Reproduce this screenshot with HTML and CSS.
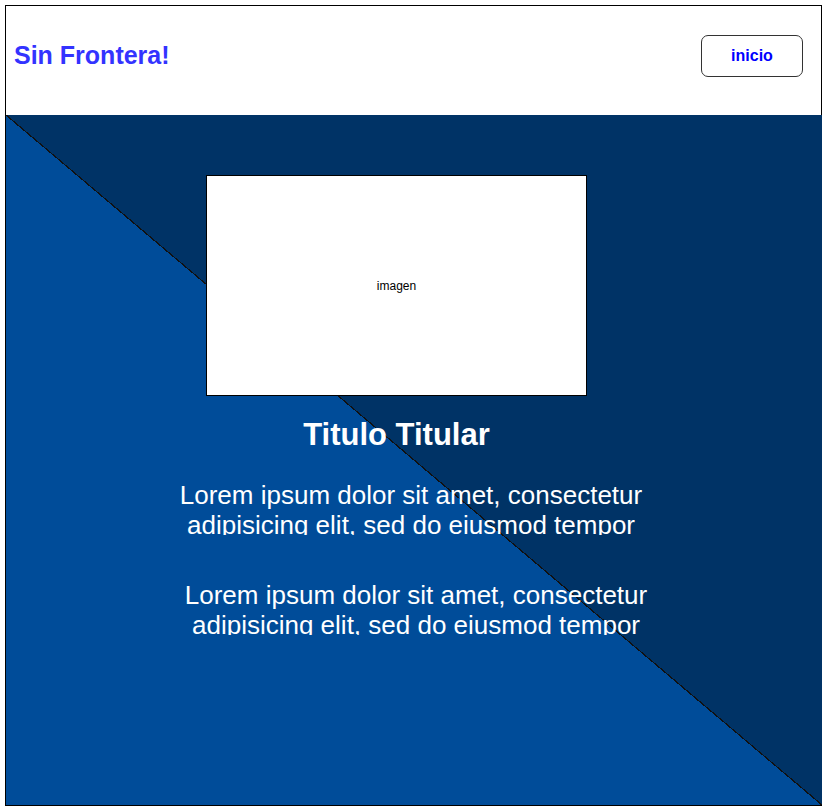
FILE: index.html
```html
<!DOCTYPE html>
<html lang="es">
<head>
<meta charset="utf-8">
<title>Sin Frontera!</title>
<link rel="stylesheet" href="styles.css">
</head>
<body>
<div class="page">
  <header class="topbar">
    <div class="brand">Sin Frontera!</div>
    <a class="btn" href="#">inicio</a>
  </header>
  <main class="hero">
    <div class="image-box">imagen</div>
    <h1 class="title">Titulo Titular</h1>
    <p class="para para-one">Lorem ipsum dolor sit amet, consectetur adipisicing elit, sed do eiusmod tempor</p>
    <p class="para para-two">Lorem ipsum dolor sit amet, consectetur adipisicing elit, sed do eiusmod tempor</p>
  </main>
</div>
</body>
</html>
```
FILE: styles.css
```css
html, body {
  margin: 0;
  padding: 0;
  background: #ffffff;
}
body {
  font-family: "Liberation Sans", Arial, sans-serif;
}
.page {
  margin: 5px 0 0 5px;
  width: 817px;
}
.topbar {
  box-sizing: border-box;
  height: 110px;
  border: 1px solid #000;
  border-bottom: none;
  background: #fff;
  display: flex;
  align-items: center;
  justify-content: space-between;
  padding: 0 18px 10px 8px;
}
.brand {
  font-size: 25px;
  font-weight: bold;
  color: #3333ff;
}
.btn {
  box-sizing: border-box;
  width: 102px;
  height: 42px;
  border: 1px solid #333;
  border-radius: 7px;
  display: flex;
  align-items: center;
  justify-content: center;
  font-size: 16px;
  font-weight: bold;
  color: #0000ff;
  text-decoration: none;
}
.hero {
  box-sizing: border-box;
  height: 691px;
  border-left: 1px solid #000;
  border-bottom: 1px solid #000;
  background: linear-gradient(to bottom left,
    #003366 calc(50% - 0.6px),
    #111 calc(50% - 0.6px),
    #111 calc(50% + 0.6px),
    #004c99 calc(50% + 0.6px));
  display: flex;
  flex-direction: column;
  align-items: flex-start;
  padding-top: 60px;
}
.image-box {
  box-sizing: border-box;
  margin-left: 200px;
  width: 381px;
  height: 221px;
  background: #fff;
  border: 1px solid #000;
  display: flex;
  align-items: center;
  justify-content: center;
  font-size: 12px;
  color: #000;
}
.title {
  margin: 20px 0 0 200px;
  width: 381px;
  text-align: center;
  font-size: 31px;
  line-height: 37px;
  font-weight: bold;
  color: #fff;
}
.para {
  margin: 0;
  width: 500px;
  height: 55px;
  overflow: hidden;
  text-align: center;
  font-size: 26px;
  line-height: 30px;
  color: #fff;
}
.para-one {
  margin-top: 27px;
  margin-left: 155px;
}
.para-two {
  margin-top: 45px;
  margin-left: 160px;
}
```
